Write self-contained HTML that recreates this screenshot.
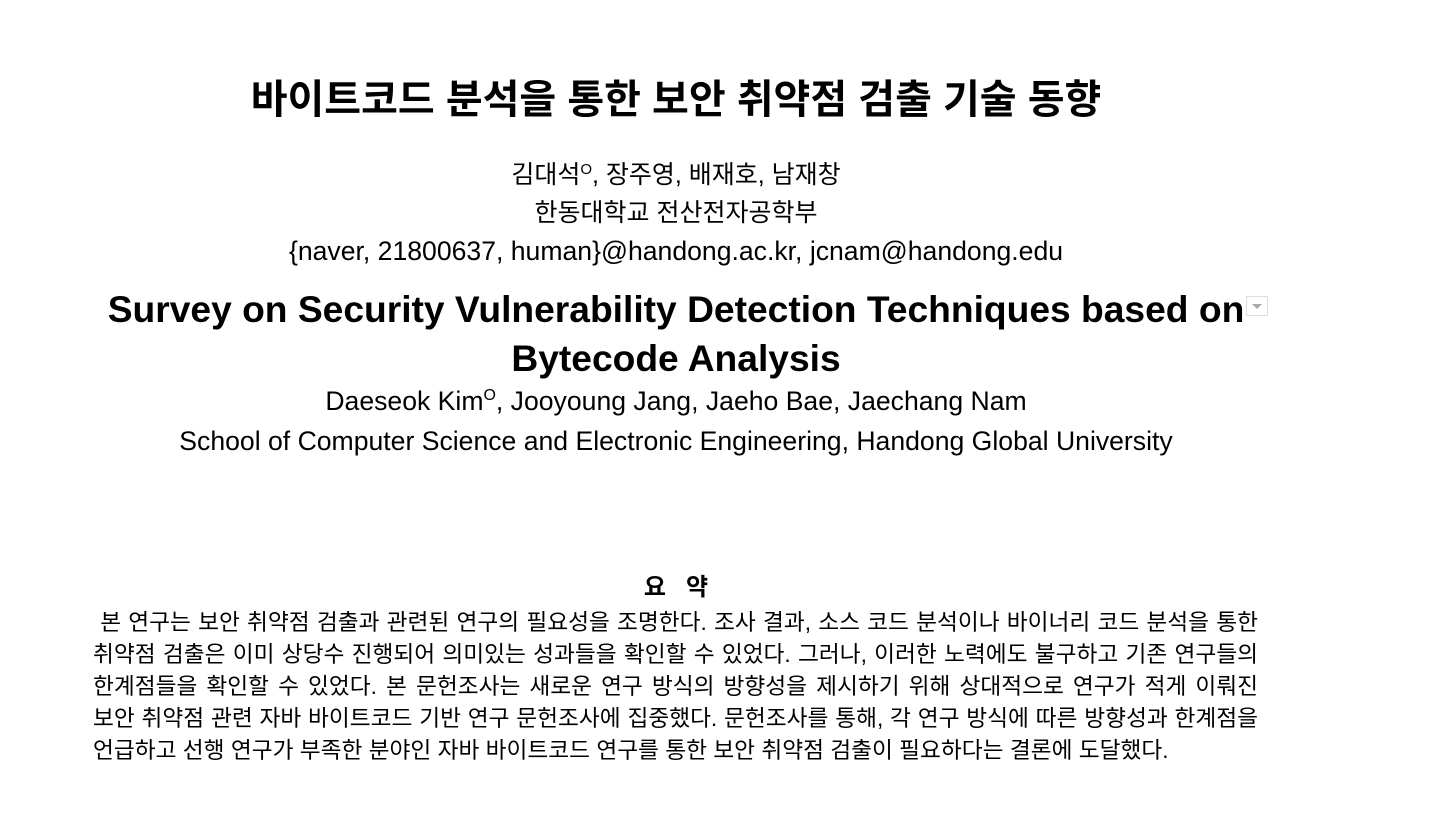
<!DOCTYPE html>
<html><head><meta charset="utf-8"><style>
body{margin:0;width:1440px;height:836px;background:#fff;position:relative;overflow:hidden;font-family:"Liberation Sans","Noto Sans CJK KR",sans-serif;color:#000}
.c{position:absolute;left:0;width:1352px;text-align:center;white-space:nowrap}
sup{font-size:60%;vertical-align:0;position:relative;top:-0.6em}
.ab{position:absolute;left:93px;width:1165px;font-size:22.7px;line-height:32px}
.ab div{white-space:nowrap;text-align:justify;text-align-last:justify}
</style></head><body>
<div class="c" style="top:76px;font-size:40px;font-weight:bold;line-height:48px">바이트코드 분석을 통한 보안 취약점 검출 기술 동향</div>
<div class="c" style="top:159px;font-size:25px;line-height:32px">김대석<sup>O</sup>, 장주영, 배재호, 남재창</div>
<div class="c" style="top:197px;font-size:25px;line-height:32px">한동대학교 전산전자공학부</div>
<div class="c" style="top:235px;font-size:26.6px;line-height:32px">{naver, 21800637, human}@handong.ac.kr, jcnam@handong.edu</div>
<div class="c" style="top:287px;font-size:37.2px;font-weight:bold;line-height:44px">Survey on Security Vulnerability Detection Techniques based on</div>
<div style="position:absolute;left:1246px;top:296px;width:22px;height:20px;border:1px solid #ddd;box-sizing:border-box"><div style="position:absolute;left:5px;top:7px;width:0;height:0;border-left:5px solid transparent;border-right:5px solid transparent;border-top:5px solid #aaa"></div></div>
<div class="c" style="top:336px;font-size:37.2px;font-weight:bold;line-height:44px">Bytecode Analysis</div>
<div class="c" style="top:385px;font-size:26.6px;line-height:32px">Daeseok Kim<sup>O</sup>, Jooyoung Jang, Jaeho Bae, Jaechang Nam</div>
<div class="c" style="top:425px;font-size:26.6px;line-height:32px">School of Computer Science and Electronic Engineering, Handong Global University</div>
<div class="c" style="top:573px;font-size:24px;font-weight:bold;line-height:30px">요&nbsp;&nbsp;&nbsp;약</div>
<div class="ab" style="top:606px">
<div>&nbsp;본 연구는 보안 취약점 검출과 관련된 연구의 필요성을 조명한다. 조사 결과, 소스 코드 분석이나 바이너리 코드 분석을 통한</div>
<div>취약점 검출은 이미 상당수 진행되어 의미있는 성과들을 확인할 수 있었다. 그러나, 이러한 노력에도 불구하고 기존 연구들의</div>
<div>한계점들을 확인할 수 있었다. 본 문헌조사는 새로운 연구 방식의 방향성을 제시하기 위해 상대적으로 연구가 적게 이뤄진</div>
<div>보안 취약점 관련 자바 바이트코드 기반 연구 문헌조사에 집중했다. 문헌조사를 통해, 각 연구 방식에 따른 방향성과 한계점을</div>
<div style="text-align-last:left">언급하고 선행 연구가 부족한 분야인 자바 바이트코드 연구를 통한 보안 취약점 검출이 필요하다는 결론에 도달했다.</div>
</div>
</body></html>
